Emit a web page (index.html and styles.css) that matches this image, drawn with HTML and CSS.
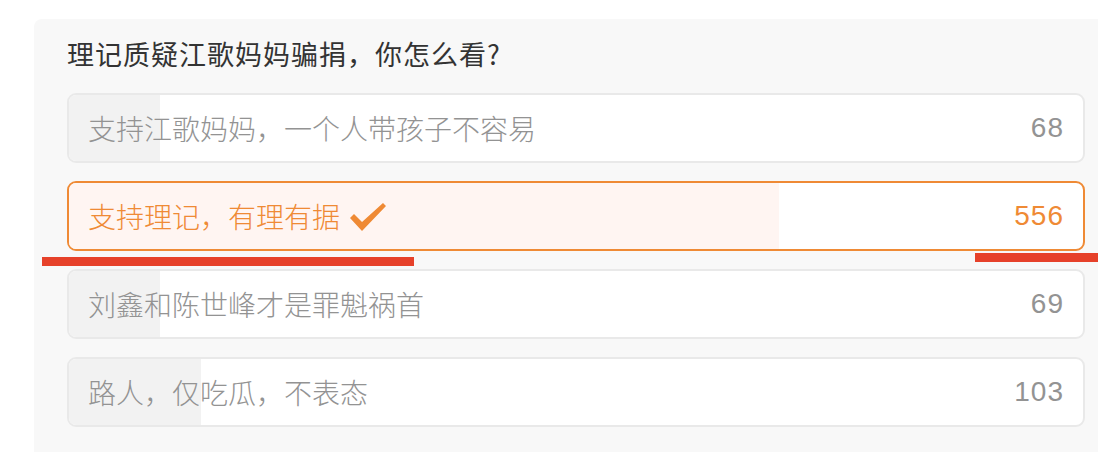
FILE: index.html
```html
<!DOCTYPE html>
<html lang="zh">
<head>
<meta charset="utf-8">
<link rel="stylesheet" href="styles.css">
</head>
<body>
<div class="page">
  <section class="card">
    <h2 class="title">理记质疑江歌妈妈骗捐，你怎么看?</h2>
    <div class="options">
      <div class="option">
        <div class="fill" style="width:9%"></div>
        <span class="label">支持江歌妈妈，一个人带孩子不容易</span>
        <span class="count">68</span>
      </div>
      <div class="option selected">
        <div class="fill" style="width:70%"></div>
        <span class="label">支持理记，有理有据
          <svg class="check" width="36" height="28" viewBox="0 0 36 28"><polygon points="0,15 4,11 12,19 33,0 36,3 12,28" fill="#ef8a35"/></svg>
        </span>
        <span class="count">556</span>
      </div>
      <div class="option">
        <div class="fill" style="width:9%"></div>
        <span class="label">刘鑫和陈世峰才是罪魁祸首</span>
        <span class="count">69</span>
      </div>
      <div class="option">
        <div class="fill" style="width:13%"></div>
        <span class="label">路人，仅吃瓜，不表态</span>
        <span class="count">103</span>
      </div>
    </div>
  </section>
  <div class="mark mark-left"></div>
  <div class="mark mark-right"></div>
</div>
</body>
</html>
```

FILE: styles.css
```css
* { box-sizing: border-box; }
html, body {
  margin: 0;
  padding: 0;
  background: #ffffff;
  overflow: hidden;
}
body {
  font-family: "Liberation Sans", "Noto Sans CJK SC", sans-serif;
}
.page {
  position: relative;
  width: 1098px;
  height: 452px;
  padding: 19px 0 0 34px;
}
.card {
  background: #f8f8f8;
  border-radius: 8px 0 0 0;
  padding: 15px 13px 40px 33px;
}
.title {
  margin: 0;
  font-family: "Noto Sans CJK SC", sans-serif;
  font-size: 27px;
  font-weight: 400;
  line-height: 40px;
  color: #333333;
  letter-spacing: 1px;
}
.options {
  margin-top: 19px;
  display: flex;
  flex-direction: column;
  gap: 18px;
}
.option {
  position: relative;
  height: 70px;
  border: 2px solid #e9e9e9;
  border-radius: 9px;
  background: #ffffff;
  overflow: hidden;
  display: flex;
  align-items: center;
  justify-content: space-between;
  padding: 0 20px 0 20px;
}
.fill {
  position: absolute;
  left: 0;
  top: 0;
  bottom: 0;
  background: #f2f2f2;
}
.label, .count {
  position: relative;
  font-size: 28px;
  line-height: 40px;
  color: #939393;
}
.label {
  font-family: "Noto Sans CJK SC", sans-serif;
  font-weight: 300;
  display: flex;
  align-items: center;
  margin-left: -1px;
}
.count {
  font-family: "Liberation Sans", "Noto Sans CJK SC", sans-serif;
  font-size: 28px;
  letter-spacing: 1px;
  margin-right: -1px;
}
.option.selected {
  border-color: #ef8a35;
}
.option.selected .fill {
  background: #fff5f2;
}
.option.selected .label,
.option.selected .count {
  color: #ef8a35;
}
.check {
  margin-left: 10px;
  margin-top: 2px;
}
.mark {
  position: absolute;
  height: 9px;
  background: #e6412a;
}
.mark-left {
  left: 42px;
  top: 257px;
  width: 372px;
}
.mark-right {
  left: 975px;
  top: 253px;
  width: 123px;
}
```
